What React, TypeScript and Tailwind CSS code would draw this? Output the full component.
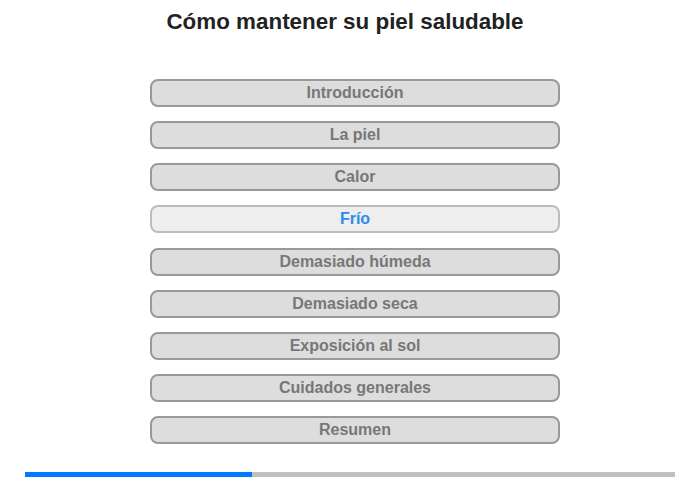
import React from "react";

const items = [
  "Introducción",
  "La piel",
  "Calor",
  "Frío",
  "Demasiado húmeda",
  "Demasiado seca",
  "Exposición al sol",
  "Cuidados generales",
  "Resumen",
];

export default function App() {
  return (
    <div
      className="w-[700px] h-[480px] bg-white flex flex-col"
      style={{ fontFamily: '"Liberation Sans", Arial, sans-serif' }}
    >
      <h1 className="pt-[9px] text-center text-[22.4px] leading-[26px] font-bold text-[#222222] w-[690px]">
        Cómo mantener su piel saludable
      </h1>
      <div className="mt-[44px] ml-[150px] w-[410px] flex flex-col gap-[14.125px]">
        {items.map((t) => {
          const active = t === "Frío";
          return (
            <div
              key={t}
              className={
                active
                  ? "h-[28px] rounded-[8px] border-2 border-[#bcbcbc] bg-[#eeeeee] flex items-center justify-center text-[16px] font-bold text-[#2b8af5]"
                  : "h-[28px] rounded-[8px] border-2 border-[#999999] bg-[#dddddd] flex items-center justify-center text-[16px] font-bold text-[#777777]"
              }
            >
              {t}
            </div>
          );
        })}
      </div>
      <div className="mt-[28px] ml-[25px] w-[650px] h-[5px] bg-[#c0c0c0] flex">
        <div className="w-[227px] h-full bg-[#007bff]" />
      </div>
    </div>
  );
}
